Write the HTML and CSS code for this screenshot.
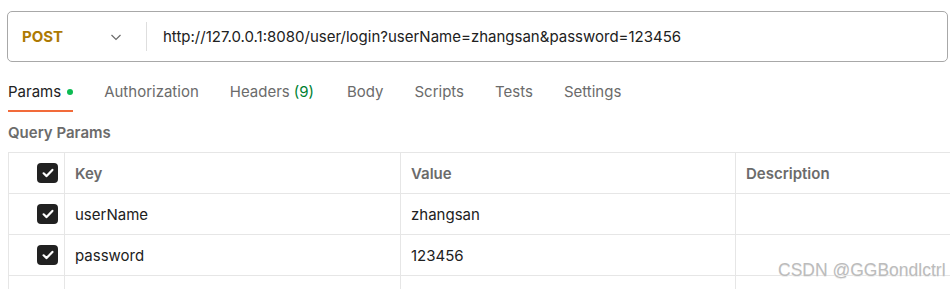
FILE: index.html
```html
<!DOCTYPE html>
<html lang="en">
<head>
    <meta charset="UTF-8">
    <title>Params</title>
    <link rel="stylesheet" href="styles.css">
</head>
<body>
    <div class="requestBar">
        <div class="method">
            <span class="methodName">POST</span>
            <svg class="chevron" width="12" height="12" viewBox="0 0 12 12"><path d="M1.5 4 L6 8.5 L10.5 4" fill="none" stroke="#6b6b6b" stroke-width="1.2"/></svg>
        </div>
        <div class="url">http://127.0.0.1:8080/user/login?userName=zhangsan&amp;password=123456</div>
    </div>
    <div class="tabs">
        <div class="tab active">Params <span class="dot"></span></div>
        <div class="tab">Authorization</div>
        <div class="tab headers">Headers <span class="count">(9)</span></div>
        <div class="tab">Body</div>
        <div class="tab">Scripts</div>
        <div class="tab">Tests</div>
        <div class="tab">Settings</div>
    </div>
    <div class="sectionTitle">Query Params</div>
    <div class="paramTable">
        <div class="row head">
            <div class="cell check"><span class="box"><svg width="14" height="14" viewBox="0 0 14 14"><path d="M2.6 7.3 L5.6 10.1 L11.4 3.9" fill="none" stroke="#fff" stroke-width="2.2" stroke-linecap="round" stroke-linejoin="round"/></svg></span></div>
            <div class="cell key">Key</div>
            <div class="cell value">Value</div>
            <div class="cell desc">Description</div>
        </div>
        <div class="row">
            <div class="cell check"><span class="box"><svg width="14" height="14" viewBox="0 0 14 14"><path d="M2.6 7.3 L5.6 10.1 L11.4 3.9" fill="none" stroke="#fff" stroke-width="2.2" stroke-linecap="round" stroke-linejoin="round"/></svg></span></div>
            <div class="cell key">userName</div>
            <div class="cell value">zhangsan</div>
            <div class="cell desc"></div>
        </div>
        <div class="row">
            <div class="cell check"><span class="box"><svg width="14" height="14" viewBox="0 0 14 14"><path d="M2.6 7.3 L5.6 10.1 L11.4 3.9" fill="none" stroke="#fff" stroke-width="2.2" stroke-linecap="round" stroke-linejoin="round"/></svg></span></div>
            <div class="cell key">password</div>
            <div class="cell value">123456</div>
            <div class="cell desc"></div>
        </div>
        <div class="row">
            <div class="cell check"></div>
            <div class="cell key"></div>
            <div class="cell value"></div>
            <div class="cell desc"></div>
        </div>
    </div>
    <div class="watermark">CSDN @GGBondlctrl</div>
</body>
</html>
```
FILE: styles.css
```css
body{
    margin: 0;
    padding: 0;
    width: 950px;
    height: 289px;
    overflow: hidden;
    position: relative;
    background-color: #ffffff;
    font-family: Inter, "Noto Sans", sans-serif;
    font-size: 15px;
    color: #212121;
}
.requestBar{
    margin: 11px 2px 0 7px;
    height: 49px;
    border: 1px solid #a8a8a8;
    border-radius: 5px;
    display: flex;
    align-items: center;
}
.method{
    width: 139px;
    padding-left: 14px;
    display: flex;
    align-items: center;
    justify-content: space-between;
    padding-right: 24px;
    box-sizing: border-box;
    border-right: 1px solid #dedede;
    height: 29px;
}
.methodName{
    font-weight: 700;
    font-size: 15px;
    color: #ad7a03;
}
.url{
    padding-left: 16px;
    color: #212121;
}
.tabs{
    display: flex;
    gap: 31px;
    margin-left: 8px;
}
.tab{
    padding: 20px 0 8px;
    line-height: 20px;
    color: #6b6b6b;
    border-bottom: 2px solid transparent;
    display: flex;
    align-items: center;
}
.tab.active{
    color: #212121;
    border-bottom-color: #f26b3a;
}
.tab.headers{
    margin-right: 2px;
}
.dot{
    width: 6px;
    height: 6px;
    border-radius: 50%;
    background-color: #0cbb52;
    margin-left: 6px;
}
.count{
    color: #007f31;
    margin-left: 4px;
}
.sectionTitle{
    margin: 11px 0 0 8px;
    line-height: 20px;
    font-weight: 600;
    color: #6b6b6b;
}
.paramTable{
    margin: 9px 0 0 8px;
    border-top: 1px solid #e6e6e6;
    border-left: 1px solid #e6e6e6;
}
.row{
    display: flex;
    height: 41px;
    border-bottom: 1px solid #e6e6e6;
    box-sizing: border-box;
}
.cell{
    display: flex;
    align-items: center;
    padding-left: 10px;
    box-sizing: border-box;
    border-right: 1px solid #e6e6e6;
}
.check{
    width: 56px;
    justify-content: flex-end;
    padding-right: 6px;
}
.key{
    width: 336px;
}
.value{
    width: 335px;
}
.desc{
    flex: 1;
    border-right: none;
}
.head .cell{
    font-weight: 600;
    color: #6b6b6b;
}
.box{
    width: 21px;
    height: 20px;
    border-radius: 4px;
    background-color: #212121;
    display: flex;
    align-items: center;
    justify-content: center;
}
.watermark{
    position: absolute;
    left: 778px;
    top: 260px;
    font-family: "Liberation Sans", Arial, sans-serif;
    font-size: 17.5px;
    color: #bcbcbc;
    text-shadow: 0 1px 0 #eeeeee;
}
```
